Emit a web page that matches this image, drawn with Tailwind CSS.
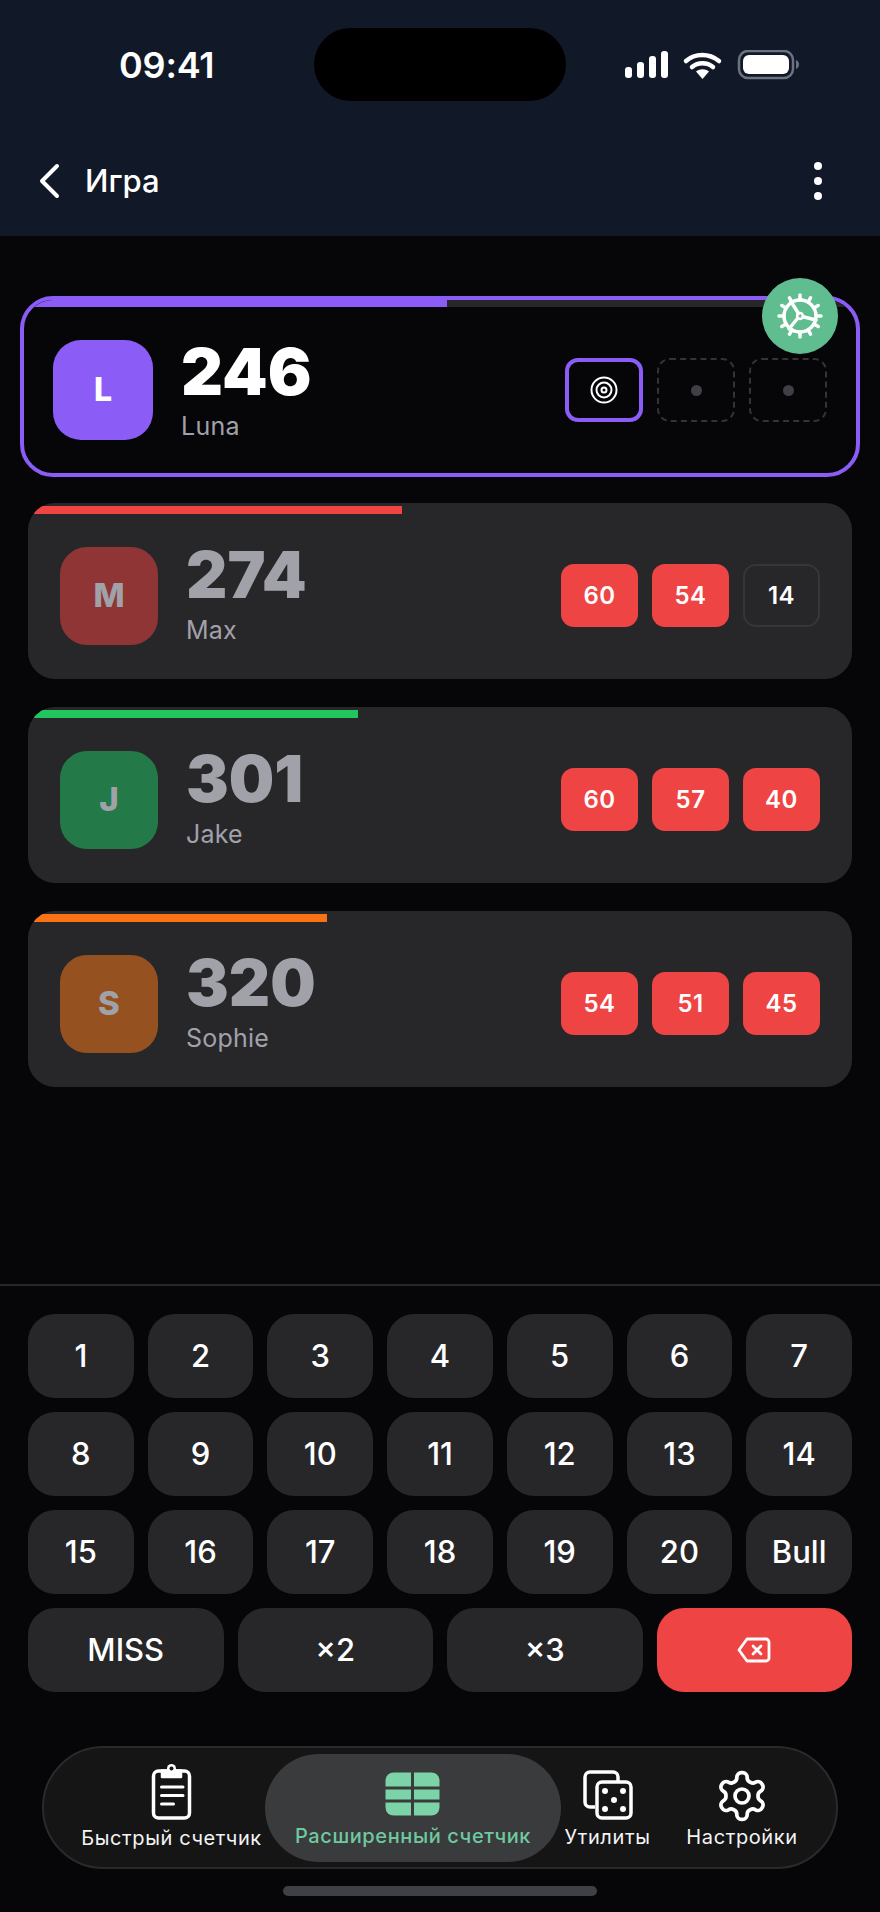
<!doctype html>
<html lang="ru">
<head>
<meta charset="utf-8">
<script src="https://cdn.jsdelivr.net/npm/@tailwindcss/browser@4"></script>
</head>
<body class="m-0 bg-[#060609]">
<div class="w-[880px] h-[1912px] overflow-hidden flex flex-col bg-[#060609] text-white font-['Inter',sans-serif]">

  <!-- Header -->
  <header class="h-[236px] bg-[#111827] shrink-0 flex flex-col">
    <div class="h-[156px] relative flex items-start">
      <span class="ml-[119px] mt-[44px] text-[36px] leading-[42px] font-semibold tracking-[-0.2px]">09:41</span>
      <div class="absolute left-[314px] top-[28px] w-[252px] h-[73px] rounded-[37px] bg-black"></div>
      <div class="absolute left-[625px] top-[50px] flex items-start">
        <svg width="176" height="30" viewBox="0 0 176 30" fill="none">
          <rect x="0" y="17" width="7" height="11" rx="3" fill="#fff"/>
          <rect x="12" y="12" width="7" height="16" rx="3" fill="#fff"/>
          <rect x="24" y="6" width="7" height="22" rx="3" fill="#fff"/>
          <rect x="36" y="1" width="7" height="27" rx="3" fill="#fff"/>
          <path d="M61 11c9-8 23-8 33 0" stroke="#fff" stroke-width="4.5" stroke-linecap="round"/>
          <path d="M67 17c6-5 15-5 21 0" stroke="#fff" stroke-width="4.500" stroke-linecap="round"/>
          <path d="M71 21.500c4-3 9-3 13 0l-6.500 7.500z" fill="#fff"/>
          <rect x="114" y="1" width="54" height="27" rx="9" stroke="#6b7280" stroke-width="2.500"/>
          <rect x="118" y="5" width="46" height="19" rx="6" fill="#fff"/>
          <path d="M171 10c2 .5 3 2.500 3 4.500s-1 4-3 4.500z" fill="#6b7280"/>
        </svg>
      </div>
    </div>
    <div class="flex items-center justify-between h-[50px] pl-[39px] pr-[58px]">
      <div class="flex items-center">
        <svg width="22" height="36" viewBox="0 0 22 36" fill="none"><path d="M19 3 L4 18 L19 33" stroke="#fff" stroke-width="4" stroke-linecap="round" stroke-linejoin="round" transform="translate(-1 0)"/></svg>
        <span class="ml-[24px] text-[31px] leading-[40px] font-medium">Игра</span>
      </div>
      <div class="flex flex-col gap-[7px]">
        <span class="w-[8px] h-[8px] rounded-full bg-white"></span>
        <span class="w-[8px] h-[8px] rounded-full bg-white"></span>
        <span class="w-[8px] h-[8px] rounded-full bg-white"></span>
      </div>
    </div>
  </header>

  <!-- Players -->
  <main class="h-[1048px] shrink-0 flex flex-col">
    <div class="relative mt-[60px] mx-[20px] h-[181px]">
      <div class="relative h-full border-[4px] border-[#8b5cf6] rounded-[33px] overflow-hidden flex items-center pl-[29px] pr-[29px] pt-[7px]">
        <div class="absolute left-0 top-0 right-0 h-[7px] bg-[#27272a]"><div class="h-full w-[423px] bg-[#8b5cf6]"></div></div>
        <div class="w-[100px] h-[100px] rounded-[28px] bg-[#8b5cf6] flex items-center justify-center text-[32px] font-extrabold">L</div>
        <div class="ml-[28px] flex flex-col">
          <span class="text-[65px] leading-[66px] font-black">246</span>
          <span class="mt-[6px] text-[25px] leading-[30px] tracking-[0.3px] text-[#a1a1aa]">Luna</span>
        </div>
        <div class="ml-auto flex gap-[14px]">
          <div class="w-[78px] h-[64px] rounded-[13px] border-[4px] border-[#8b5cf6] flex items-center justify-center">
            <svg width="28" height="28" viewBox="0 0 28 28" fill="none" stroke="#fff" stroke-width="2"><circle cx="14" cy="14" r="12.500"/><circle cx="14" cy="14" r="7.500"/><circle cx="14" cy="14" r="2.500"/></svg>
          </div>
          <div class="w-[78px] h-[64px] rounded-[13px] border-[2px] border-dashed border-[#333338] flex items-center justify-center"><span class="w-[11px] h-[11px] rounded-full bg-[#3f3f46]"></span></div>
          <div class="w-[78px] h-[64px] rounded-[13px] border-[2px] border-dashed border-[#333338] flex items-center justify-center"><span class="w-[11px] h-[11px] rounded-full bg-[#3f3f46]"></span></div>
        </div>
      </div>
      <div class="absolute left-[742px] top-[-18px] w-[76px] h-[76px] rounded-full bg-[#5fbd8f] flex items-center justify-center">
        <svg width="48" height="48" viewBox="0 0 48 48" fill="none" stroke="#fff" stroke-width="3.500" stroke-linecap="round">
          <circle cx="24" cy="24" r="16"/>
          <circle cx="24" cy="24" r="3" stroke-width="2.500"/>
          <path d="M22.500 21.500 L15 9.500 M27 24.800 L40 28 M21.800 26 L13 37"/>
          <path d="M24 3v5M24 40v5M3 24h5M40 24h5M13.500 5.800l2.500 4.300M32 37.900l2.500 4.300M5.800 13.500l4.300 2.500M37.900 32l4.300 2.500M5.800 34.500l4.300-2.500M37.900 16l4.300-2.500M13.500 42.200l2.500-4.300M32 10.100l2.500-4.300"/>
        </svg>
      </div>
    </div>

    <!-- Max -->
    <div class="relative mt-[26px] mx-[28px] h-[176px] rounded-[27px] bg-[#27272a] overflow-hidden flex items-center pl-[32px] pr-[32px] pt-[9px]">
      <div class="absolute left-[6px] top-[3px] w-[368px] h-[8px] rounded-tl-[12px] bg-[#ef4444]"></div>
      <div class="w-[98px] h-[98px] rounded-[27px] bg-[#8f3535] flex items-center justify-center text-[33px] font-extrabold text-[#a1a1aa]">M</div>
      <div class="ml-[28px] flex flex-col">
        <span class="text-[64px] leading-[66px] font-black text-[#a1a1aa] mt-[-4px]">274</span>
        <span class="mt-[7px] text-[25px] leading-[30px] tracking-[0.2px] text-[#a1a1aa]">Max</span>
      </div>
      <div class="ml-auto flex gap-[14px]">
        <div class="w-[77px] h-[63px] rounded-[13px] bg-[#ef4444] flex items-center justify-center text-[24px] font-semibold tracking-[0.5px]">60</div>
        <div class="w-[77px] h-[63px] rounded-[13px] bg-[#ef4444] flex items-center justify-center text-[24px] font-semibold tracking-[0.5px]">54</div>
        <div class="w-[77px] h-[63px] rounded-[13px] border-[2px] border-[#36363a] flex items-center justify-center text-[24px] font-semibold tracking-[0.5px]">14</div>
      </div>
    </div>

    <!-- Jake -->
    <div class="relative mt-[28px] mx-[28px] h-[176px] rounded-[27px] bg-[#27272a] overflow-hidden flex items-center pl-[32px] pr-[32px] pt-[9px]">
      <div class="absolute left-[6px] top-[3px] w-[324px] h-[8px] rounded-tl-[12px] bg-[#22c55e]"></div>
      <div class="w-[98px] h-[98px] rounded-[27px] bg-[#237a48] flex items-center justify-center text-[33px] font-extrabold text-[#a1a1aa]">J</div>
      <div class="ml-[28px] flex flex-col">
        <span class="text-[64px] leading-[66px] font-black text-[#a1a1aa] mt-[-4px]">301</span>
        <span class="mt-[7px] text-[25px] leading-[30px] tracking-[0.2px] text-[#a1a1aa]">Jake</span>
      </div>
      <div class="ml-auto flex gap-[14px]">
        <div class="w-[77px] h-[63px] rounded-[13px] bg-[#ef4444] flex items-center justify-center text-[24px] font-semibold tracking-[0.5px]">60</div>
        <div class="w-[77px] h-[63px] rounded-[13px] bg-[#ef4444] flex items-center justify-center text-[24px] font-semibold tracking-[0.5px]">57</div>
        <div class="w-[77px] h-[63px] rounded-[13px] bg-[#ef4444] flex items-center justify-center text-[24px] font-semibold tracking-[0.5px]">40</div>
      </div>
    </div>

    <!-- Sophie -->
    <div class="relative mt-[28px] mx-[28px] h-[176px] rounded-[27px] bg-[#27272a] overflow-hidden flex items-center pl-[32px] pr-[32px] pt-[9px]">
      <div class="absolute left-[6px] top-[3px] w-[293px] h-[8px] rounded-tl-[12px] bg-[#f97316]"></div>
      <div class="w-[98px] h-[98px] rounded-[27px] bg-[#955120] flex items-center justify-center text-[33px] font-extrabold text-[#a1a1aa]">S</div>
      <div class="ml-[28px] flex flex-col">
        <span class="text-[64px] leading-[66px] font-black text-[#a1a1aa] mt-[-4px]">320</span>
        <span class="mt-[7px] text-[25px] leading-[30px] tracking-[0.2px] text-[#a1a1aa]">Sophie</span>
      </div>
      <div class="ml-auto flex gap-[14px]">
        <div class="w-[77px] h-[63px] rounded-[13px] bg-[#ef4444] flex items-center justify-center text-[24px] font-semibold tracking-[0.5px]">54</div>
        <div class="w-[77px] h-[63px] rounded-[13px] bg-[#ef4444] flex items-center justify-center text-[24px] font-semibold tracking-[0.5px]">51</div>
        <div class="w-[77px] h-[63px] rounded-[13px] bg-[#ef4444] flex items-center justify-center text-[24px] font-semibold tracking-[0.5px]">45</div>
      </div>
    </div>
  </main>

  <!-- Keypad -->
  <section class="border-t-[2px] border-[#27272a] shrink-0 pt-[28px] px-[28px]">
    <div class="grid grid-cols-7 gap-[14px] text-[31px] font-medium">
      <div class="h-[84px] rounded-[27px] bg-[#27272a] flex items-center justify-center">1</div>
      <div class="h-[84px] rounded-[27px] bg-[#27272a] flex items-center justify-center">2</div>
      <div class="h-[84px] rounded-[27px] bg-[#27272a] flex items-center justify-center">3</div>
      <div class="h-[84px] rounded-[27px] bg-[#27272a] flex items-center justify-center">4</div>
      <div class="h-[84px] rounded-[27px] bg-[#27272a] flex items-center justify-center">5</div>
      <div class="h-[84px] rounded-[27px] bg-[#27272a] flex items-center justify-center">6</div>
      <div class="h-[84px] rounded-[27px] bg-[#27272a] flex items-center justify-center">7</div>
      <div class="h-[84px] rounded-[27px] bg-[#27272a] flex items-center justify-center">8</div>
      <div class="h-[84px] rounded-[27px] bg-[#27272a] flex items-center justify-center">9</div>
      <div class="h-[84px] rounded-[27px] bg-[#27272a] flex items-center justify-center">10</div>
      <div class="h-[84px] rounded-[27px] bg-[#27272a] flex items-center justify-center">11</div>
      <div class="h-[84px] rounded-[27px] bg-[#27272a] flex items-center justify-center">12</div>
      <div class="h-[84px] rounded-[27px] bg-[#27272a] flex items-center justify-center">13</div>
      <div class="h-[84px] rounded-[27px] bg-[#27272a] flex items-center justify-center">14</div>
      <div class="h-[84px] rounded-[27px] bg-[#27272a] flex items-center justify-center">15</div>
      <div class="h-[84px] rounded-[27px] bg-[#27272a] flex items-center justify-center">16</div>
      <div class="h-[84px] rounded-[27px] bg-[#27272a] flex items-center justify-center">17</div>
      <div class="h-[84px] rounded-[27px] bg-[#27272a] flex items-center justify-center">18</div>
      <div class="h-[84px] rounded-[27px] bg-[#27272a] flex items-center justify-center">19</div>
      <div class="h-[84px] rounded-[27px] bg-[#27272a] flex items-center justify-center">20</div>
      <div class="h-[84px] rounded-[27px] bg-[#27272a] flex items-center justify-center">Bull</div>
    </div>
    <div class="grid grid-cols-4 gap-[14px] mt-[14px] text-[31px] font-medium">
      <div class="h-[84px] rounded-[27px] bg-[#27272a] flex items-center justify-center">MISS</div>
      <div class="h-[84px] rounded-[27px] bg-[#27272a] flex items-center justify-center">×2</div>
      <div class="h-[84px] rounded-[27px] bg-[#27272a] flex items-center justify-center">×3</div>
      <div class="h-[84px] rounded-[27px] bg-[#ef4444] flex items-center justify-center">
        <svg width="34" height="26" viewBox="0 0 34 26" fill="none" stroke="#fff" stroke-width="2.800" stroke-linejoin="round" stroke-linecap="round"><path d="M10 2 H29 a3 3 0 0 1 3 3 V21 a3 3 0 0 1 -3 3 H10 L2 13 Z"/><path d="M16 9 L24 17 M24 9 L16 17"/></svg>
      </div>
    </div>
  </section>

  <!-- Tab bar -->
  <nav class="mt-[54px] mx-[42px] h-[123px] shrink-0 rounded-[62px] border-[2px] border-[#2a2a2c] bg-[#151516] flex items-center">
    <div class="ml-[39px] w-[177px] h-full flex flex-col items-center">
      <svg class="mt-[15px]" width="44" height="58" viewBox="0 0 44 58" fill="none">
        <rect x="3.500" y="8" width="36" height="47" rx="5" stroke="#fff" stroke-width="3.500"/>
        <path d="M12 7.500 h19 v6.500 h-19 z" fill="#fff" stroke="#fff" stroke-width="2.500" stroke-linejoin="round"/>
        <circle cx="21.500" cy="5.500" r="4.500" fill="#fff"/><circle cx="21.500" cy="5.500" r="2" fill="#151516"/>
        <path d="M11.500 24 H33 M11.500 32.500 H33 M11.500 41 H23.500" stroke="#fff" stroke-width="3" stroke-linecap="round"/>
      </svg>
      <span class="mt-[4px] text-[20px] leading-[26px] tracking-[0.6px] whitespace-nowrap text-[#f4f4f5]">Быстрый счетчик</span>
    </div>
    <div class="ml-[5px] w-[296px] h-[108px] rounded-[54px] bg-[#3a3b3c] flex flex-col items-center">
      <svg class="mt-[18px]" width="56" height="44" viewBox="0 0 56 44" fill="none">
        <rect x="0.500" y="0.500" width="54" height="43" rx="8" fill="#7dd3a8"/>
        <path d="M27.500 0 V44" stroke="#3a3b3c" stroke-width="3"/>
        <path d="M0 16 H55 M0 29 H55" stroke="#3a3b3c" stroke-width="3"/>
      </svg>
      <span class="mt-[7px] text-[20px] leading-[26px] tracking-[0.6px] font-medium whitespace-nowrap text-[#6fc9a0]">Расширенный счетчик</span>
    </div>
    <div class="ml-[4px] w-[85px] h-full flex flex-col items-center">
      <svg class="mt-[22px]" width="50" height="50" viewBox="0 0 50 50" fill="none" stroke="#fff" stroke-width="3.500">
        <path d="M12 37 H7 a5 5 0 0 1 -5 -5 V7 a5 5 0 0 1 5 -5 H30 a5 5 0 0 1 5 5 V12"/>
        <rect x="14" y="12" width="34" height="36" rx="5"/>
        <g fill="#fff" stroke="none"><circle cx="22" cy="21" r="3"/><circle cx="40" cy="21" r="3"/><circle cx="31" cy="30" r="3"/><circle cx="22" cy="39" r="3"/><circle cx="40" cy="39" r="3"/></g>
      </svg>
      <span class="mt-[4px] text-[20px] leading-[26px] tracking-[0.6px] whitespace-nowrap text-[#f4f4f5]">Утилиты</span>
    </div>
    <div class="ml-[37px] w-[110px] h-full flex flex-col items-center">
      <svg class="mt-[20px]" width="56" height="56" viewBox="0 0 24 24" fill="none" stroke="#fff" stroke-width="1.600" stroke-linecap="round" stroke-linejoin="round">
        <path d="M12.220 2h-.44a2 2 0 0 0-2 2v.18a2 2 0 0 1-1 1.730l-.43.25a2 2 0 0 1-2 0l-.15-.08a2 2 0 0 0-2.730.73l-.22.38a2 2 0 0 0 .73 2.730l.15.1a2 2 0 0 1 1 1.720v.51a2 2 0 0 1-1 1.740l-.15.09a2 2 0 0 0-.73 2.730l.22.38a2 2 0 0 0 2.730.73l.15-.08a2 2 0 0 1 2 0l.43.25a2 2 0 0 1 1 1.730V20a2 2 0 0 0 2 2h.44a2 2 0 0 0 2-2v-.18a2 2 0 0 1 1-1.730l.43-.25a2 2 0 0 1 2 0l.15.08a2 2 0 0 0 2.730-.73l.22-.39a2 2 0 0 0-.73-2.730l-.15-.08a2 2 0 0 1-1-1.740v-.5a2 2 0 0 1 1-1.740l.15-.09a2 2 0 0 0 .73-2.730l-.22-.38a2 2 0 0 0-2.730-.73l-.15.08a2 2 0 0 1-2 0l-.43-.25a2 2 0 0 1-1-1.730V4a2 2 0 0 0-2-2z"/>
        <circle cx="12" cy="12" r="3"/>
      </svg>
      <span class="mt-[0px] text-[20px] leading-[26px] tracking-[0.6px] whitespace-nowrap text-[#f4f4f5]">Настройки</span>
    </div>
  </nav>

  <div class="mt-[17px] mx-auto w-[314px] h-[10px] shrink-0 rounded-full bg-[#3f3f46]"></div>
</div>
</body>
</html>
